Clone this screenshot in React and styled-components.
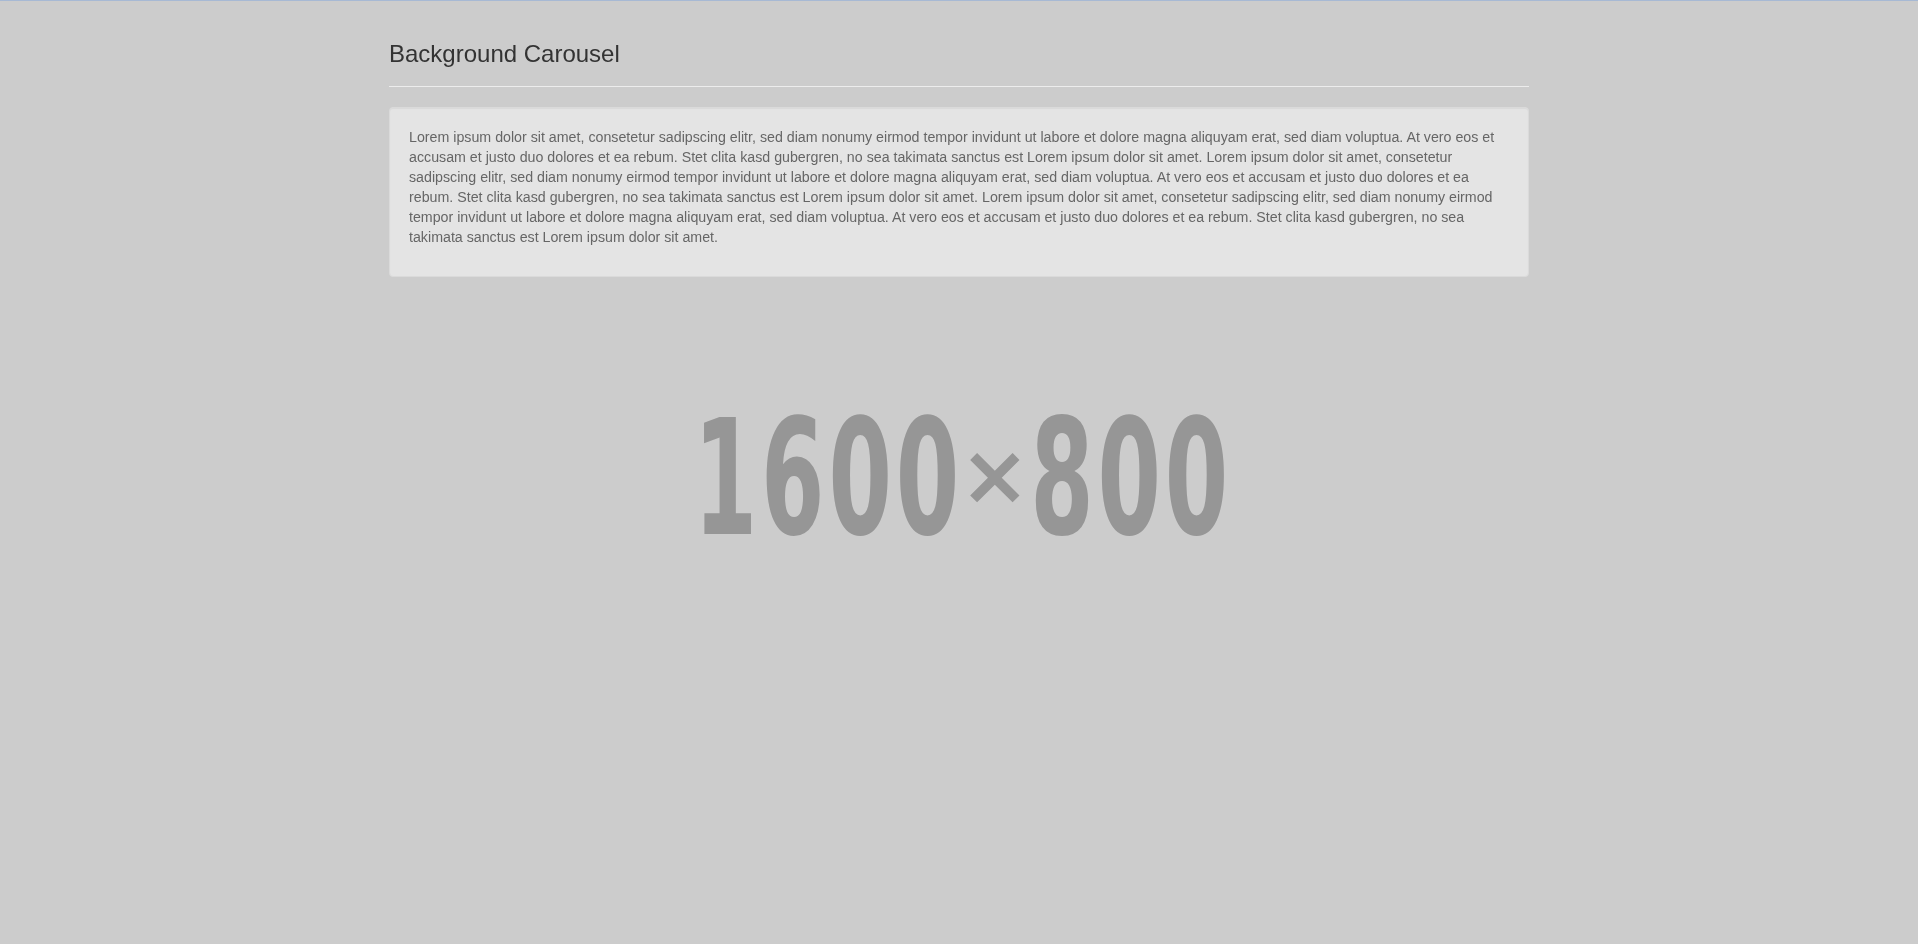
import React from 'react'
import styled, { createGlobalStyle } from 'styled-components'

const lorem =
    'Lorem ipsum dolor sit amet, consetetur sadipscing elitr, sed diam nonumy eirmod tempor invidunt ut labore et dolore magna aliquyam erat, sed diam voluptua. At vero eos et accusam et justo duo dolores et ea rebum. Stet clita kasd gubergren, no sea takimata sanctus est Lorem ipsum dolor sit amet. '

const placeholder = ['1', '6', '0', '0', '×', '8', '0', '0']

const App = () => {
    return (
        <>
            <GlobalStyle />
            <Backdrop>
                <PlaceholderRow>
                    {placeholder.map((ch, i) => (
                        <Glyph key={i}>{ch === '×' ? <Cross>{ch}</Cross> : ch}</Glyph>
                    ))}
                </PlaceholderRow>
            </Backdrop>
            <Container>
                <PageHeader>
                    <Title>Background Carousel</Title>
                </PageHeader>
                <Well>
                    <p>{(lorem + lorem + lorem).trim()}</p>
                </Well>
            </Container>
        </>
    )
}
export default App

const GlobalStyle = createGlobalStyle`
html, body {
    margin: 0;
    min-height: 100%;
}
body {
    background: #cccccc;
    border-top: 1px solid #a7b9d4;
    font-family: "Liberation Sans", Arial, sans-serif;
    font-size: 14px;
    line-height: 20px;
    color: #333;
}
* {
    box-sizing: border-box;
}
`

const Backdrop = styled.div`
position: fixed;
inset: 0;
z-index: 0;
display: flex;
align-items: center;
justify-content: center;
padding: 14px 0 0 4px;
pointer-events: none;
`

const PlaceholderRow = styled.div`
display: flex;
transform: scaleX(0.57);
font-family: "DejaVu Sans", sans-serif;
font-weight: bold;
font-size: 160px;
line-height: 1;
color: #969696;
`

const Glyph = styled.span`
width: 118px;
text-align: center;
`

const Cross = styled.span`
display: inline-block;
font-size: 84px;
transform: scaleX(1.75);
vertical-align: 30px;
`

const Container = styled.div`
position: relative;
z-index: 1;
width: 1170px;
margin: 0 auto;
padding: 0 15px;
overflow: hidden;
`

const PageHeader = styled.div`
margin: 40px 0 20px;
padding-bottom: 9px;
border-bottom: 1px solid #ececec;
`

const Title = styled.h1`
margin: 0 0 10px;
font-size: 24px;
font-weight: 500;
line-height: 1.1;
color: #333;
`

const Well = styled.div`
min-height: 20px;
padding: 19px;
margin-bottom: 20px;
background: #e4e4e4;
border: 1px solid #dadada;
border-radius: 4px;
box-shadow: inset 0 1px 1px rgba(0, 0, 0, 0.05);
color: #666;
font-size: 14.22px;
> p {
    margin: 0 0 10px;
}
`
